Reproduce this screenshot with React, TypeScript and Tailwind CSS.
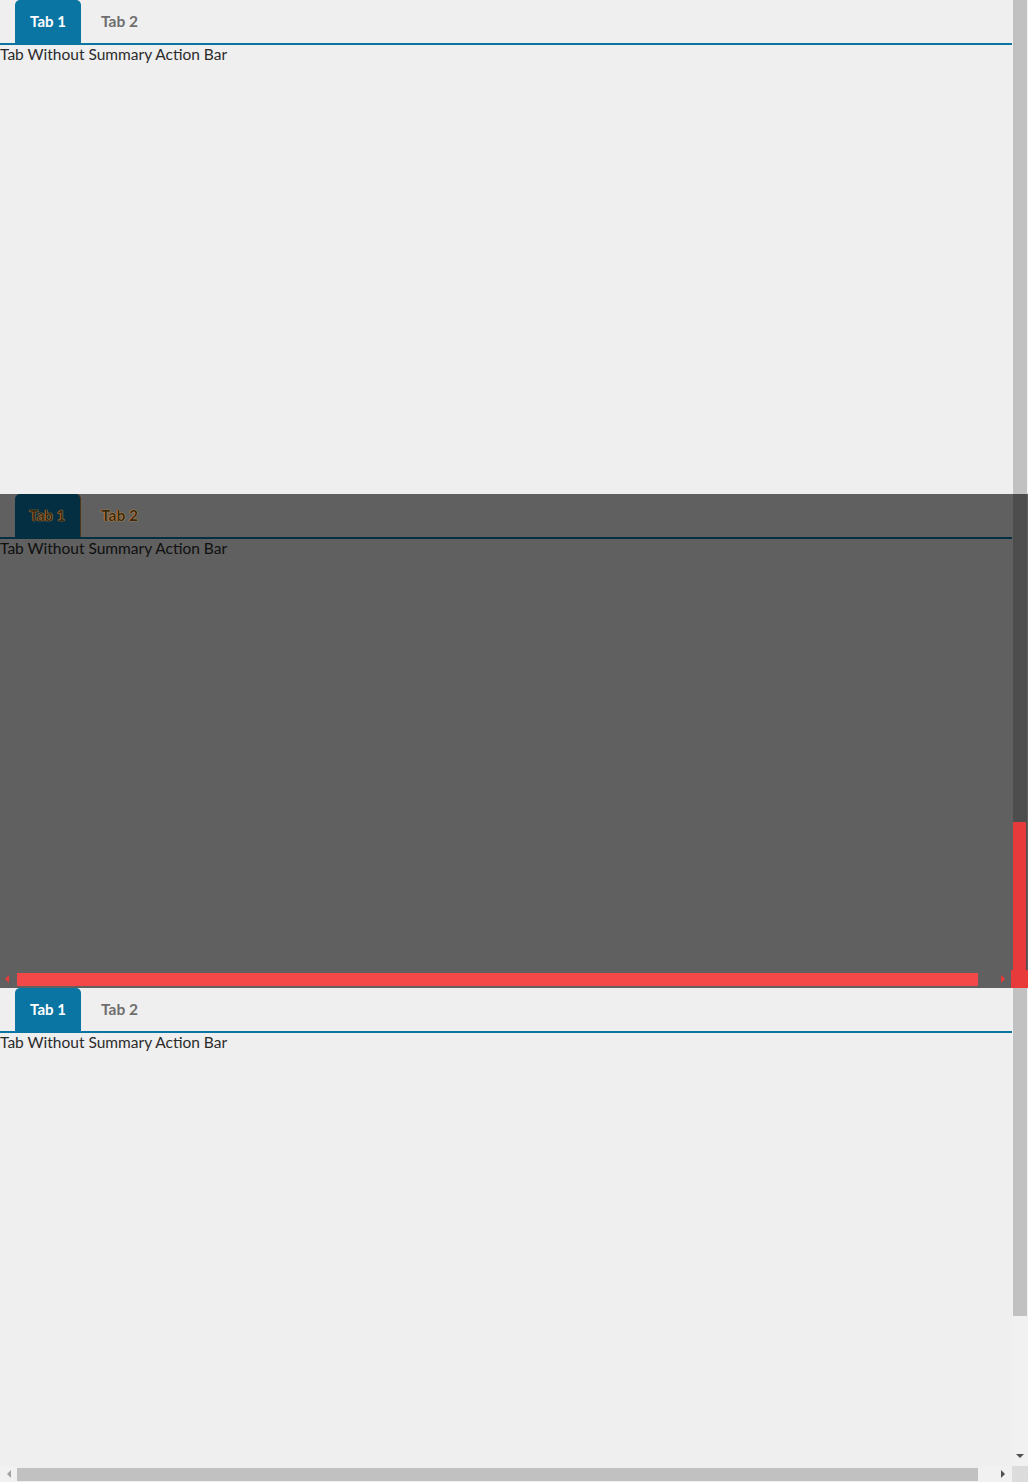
import React from 'react';

const TABS = ['Tab 1', 'Tab 2'];

const TabPanel: React.FC<{ heightClass: string; dimmed?: boolean }> = ({ heightClass, dimmed }) => (
  <section className={`${heightClass} flex flex-col`}>
    <div className="h-[43px] flex items-end border-b-2 border-[#0a74a3] box-content">
      {TABS.map((tab, i) => (
        <div
          key={tab}
          className={
            i === 0
              ? `ml-[15px] h-[43px] w-[66px] flex items-center justify-center rounded-t-[5px] bg-[#0a74a3] text-[15px] font-bold text-white ${dimmed ? 'border-r border-[#c98a3c]' : ''}`
              : 'ml-[20px] h-[43px] flex items-center text-[15.5px] font-bold text-[#6e6e6e]'
          }
        >
          <span
            className={
              dimmed
                ? 'relative z-10 text-[#3b2a12] [text-shadow:0_0_1px_#f0a040,0_0_1px_#f0a040]'
                : ''
            }
          >
            {tab}
          </span>
        </div>
      ))}
    </div>
    <p className="text-[15.5px] leading-[18px] text-[#2b2b2b]">Tab Without Summary Action Bar</p>
  </section>
);

export default function App() {
  return (
    <div
      className="relative w-[1028px] h-[1482px] overflow-hidden bg-[#efefef]"
      style={{ fontFamily: 'Lato, "Open Sans", sans-serif' }}
    >
      <div className="flex h-[1466px]">
        <main className="w-[1012px] flex flex-col">
          <TabPanel heightClass="h-[494px]" />
          <TabPanel heightClass="h-[494px]" dimmed />
          <TabPanel heightClass="h-[478px]" />
        </main>
        {/* vertical scrollbar */}
        <div className="w-[16px] bg-[#f1f1f1] flex flex-col items-center">
          <div className="w-[14px] h-[1316px] bg-[#c1c1c1]" />
          <div className="flex-1" />
          <div className="mb-[8px] w-0 h-0 border-l-[4px] border-r-[4px] border-t-[4px] border-l-transparent border-r-transparent border-t-[#505050]" />
        </div>
      </div>
      {/* horizontal scrollbar */}
      <div className="h-[16px] flex items-center">
        <div className="w-[17px] h-[16px] bg-[#f1f1f1] flex items-center justify-center">
          <div className="w-0 h-0 border-t-[4px] border-b-[4px] border-r-[4px] border-t-transparent border-b-transparent border-r-[#a3a3a3]" />
        </div>
        <div className="w-[961px] h-[13px] bg-[#c1c1c1]" />
        <div className="w-[34px] h-[16px] bg-[#f1f1f1] flex items-center justify-end pr-[7px]">
          <div className="w-0 h-0 border-t-[4px] border-b-[4px] border-l-[4px] border-t-transparent border-b-transparent border-l-[#505050]" />
        </div>
        <div className="w-[16px] h-[16px] bg-[#dcdcdc]" />
      </div>

      {/* dim overlay on middle panel */}
      <div className="absolute left-0 top-[494px] w-[1028px] h-[494px] bg-black/60" />
      <div className="absolute left-[1013px] top-[822px] w-[13px] h-[150px] bg-[#e83a3a]" />
      <div className="absolute left-[1011px] top-[970px] w-[17px] h-[18px] bg-[#e83a3a]" />
      <div className="absolute left-[17px] top-[973px] w-[961px] h-[13px] bg-[#f44848]" />
      <div className="absolute left-[5px] top-[975px] w-0 h-0 border-t-[4px] border-b-[4px] border-r-[4px] border-t-transparent border-b-transparent border-r-[#e83a3a]" />
      <div className="absolute left-[1001px] top-[975px] w-0 h-0 border-t-[4px] border-b-[4px] border-l-[4px] border-t-transparent border-b-transparent border-l-[#e83a3a]" />
    </div>
  );
}
